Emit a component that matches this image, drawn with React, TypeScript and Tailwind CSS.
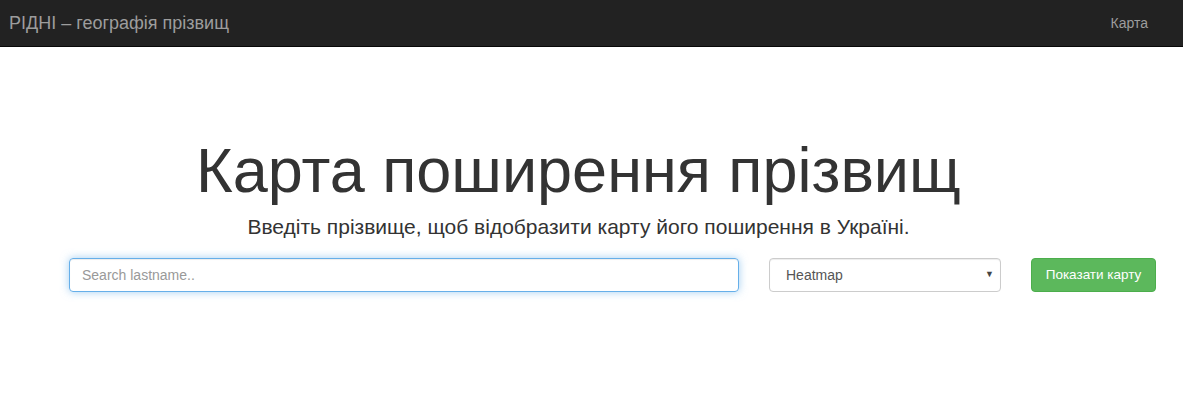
export default function App() {
  return (
    <div className="min-h-[402px] bg-white font-['Liberation_Sans',Arial,sans-serif] text-[#333]">
      <nav className="flex h-[47px] items-center justify-between border-b border-[#080808] bg-[#222]">
        <a className="pl-[9px] text-[18px] text-[#9d9d9d]" href="#">
          РІДНІ – географія прізвищ
        </a>
        <a className="pr-[35px] text-[14px] text-[#9d9d9d]" href="#">
          Карта
        </a>
      </nav>
      <div className="flex flex-col items-center pt-[88px] pr-[26px]">
        <h1 className="text-[63px] leading-[70px]">Карта поширення прізвищ</h1>
        <p className="mt-[7px] text-[21px] leading-[30px]">
          Введіть прізвище, щоб відобразити карту його поширення в Україні.
        </p>
      </div>
      <div className="mt-[16px] flex items-center pl-[69px]">
        <input
          type="text"
          placeholder="Search lastname.."
          className="h-[34px] w-[670px] rounded-[4px] border border-[#66afe9] px-[12px] text-[14px] shadow-[inset_0_1px_1px_rgba(0,0,0,0.075),0_0_8px_rgba(102,175,233,0.6)] outline-none placeholder:text-[#999]"
        />
        <div className="relative ml-[30px] h-[34px] w-[232px]">
          <select className="h-full w-full appearance-none rounded-[4px] border border-[#ccc] bg-white px-[16px] text-[14px] text-[#555] shadow-[inset_0_1px_1px_rgba(0,0,0,0.075)]">
            <option>Heatmap</option>
          </select>
          <span className="pointer-events-none absolute right-[7px] top-[10px] text-[9px] text-[#444]">▼</span>
        </div>
        <button className="ml-[30px] h-[34px] w-[125px] rounded-[4px] border border-[#4cae4c] bg-[#5cb85c] text-[13.5px] text-white">
          Показати карту
        </button>
      </div>
    </div>
  );
}
